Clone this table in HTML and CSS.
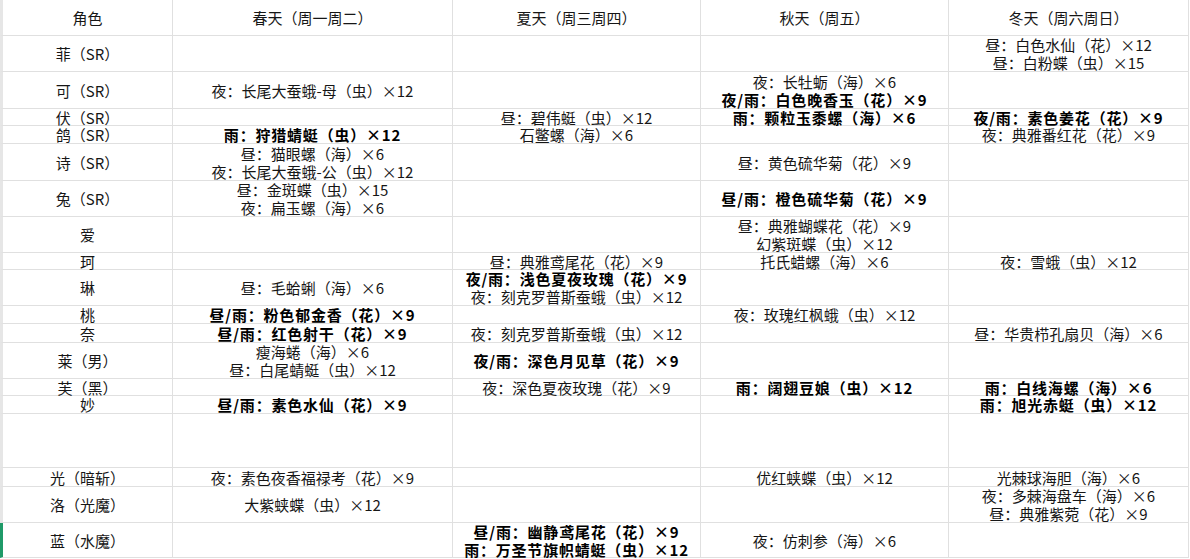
FILE: index.html
```html
<!DOCTYPE html>
<html lang="zh-CN">
<head>
<meta charset="utf-8">
<title>角色季节采集表</title>
<link rel="stylesheet" href="styles.css">
</head>
<body>
<div class="sheet">
  <div class="c first">角色</div><div class="c">春天（周一周二）</div><div class="c">夏天（周三周四）</div><div class="c">秋天（周五）</div><div class="c">冬天（周六周日）</div>

  <div class="c first">菲（SR）</div><div class="c"></div><div class="c"></div><div class="c"></div><div class="c"><span>昼：白色水仙（花）×12</span><span>昼：白粉蝶（虫）×15</span></div>

  <div class="c first">可（SR）</div><div class="c">夜：长尾大蚕蛾-母（虫）×12</div><div class="c"></div><div class="c"><span>夜：长牡蛎（海）×6</span><b>夜/雨：白色晚香玉（花）×9</b></div><div class="c"></div>

  <div class="c first">伏（SR）</div><div class="c"></div><div class="c">昼：碧伟蜓（虫）×12</div><div class="c"><b>雨：颗粒玉黍螺（海）×6</b></div><div class="c"><b>夜/雨：素色姜花（花）×9</b></div>

  <div class="c first">鸽（SR）</div><div class="c"><b>雨：狩猎蜻蜓（虫）×12</b></div><div class="c">石鳖螺（海）×6</div><div class="c"></div><div class="c">夜：典雅番红花（花）×9</div>

  <div class="c first">诗（SR）</div><div class="c"><span>昼：猫眼螺（海）×6</span><span>夜：长尾大蚕蛾-公（虫）×12</span></div><div class="c"></div><div class="c">昼：黄色硫华菊（花）×9</div><div class="c"></div>

  <div class="c first">兔（SR）</div><div class="c"><span>昼：金斑蝶（虫）×15</span><span>夜：扁玉螺（海）×6</span></div><div class="c"></div><div class="c"><b>昼/雨：橙色硫华菊（花）×9</b></div><div class="c"></div>

  <div class="c first">爱</div><div class="c"></div><div class="c"></div><div class="c"><span>昼：典雅蝴蝶花（花）×9</span><span>幻紫斑蝶（虫）×12</span></div><div class="c"></div>

  <div class="c first">珂</div><div class="c"></div><div class="c">昼：典雅鸢尾花（花）×9</div><div class="c">托氏蜡螺（海）×6</div><div class="c">夜：雪蛾（虫）×12</div>

  <div class="c first">琳</div><div class="c">昼：毛蛤蜊（海）×6</div><div class="c"><b>夜/雨：浅色夏夜玫瑰（花）×9</b><span>夜：刻克罗普斯蚕蛾（虫）×12</span></div><div class="c"></div><div class="c"></div>

  <div class="c first">桃</div><div class="c"><b>昼/雨：粉色郁金香（花）×9</b></div><div class="c"></div><div class="c">夜：玫瑰红枫蛾（虫）×12</div><div class="c"></div>

  <div class="c first">奈</div><div class="c"><b>昼/雨：红色射干（花）×9</b></div><div class="c">夜：刻克罗普斯蚕蛾（虫）×12</div><div class="c"></div><div class="c">昼：华贵栉孔扇贝（海）×6</div>

  <div class="c first">莱（男）</div><div class="c"><span>瘦海蜷（海）×6</span><span>昼：白尾蜻蜓（虫）×12</span></div><div class="c"><b>夜/雨：深色月见草（花）×9</b></div><div class="c"></div><div class="c"></div>

  <div class="c first">芙（黑）</div><div class="c"></div><div class="c">夜：深色夏夜玫瑰（花）×9</div><div class="c"><b>雨：阔翅豆娘（虫）×12</b></div><div class="c"><b>雨：白线海螺（海）×6</b></div>

  <div class="c first">妙</div><div class="c"><b>昼/雨：素色水仙（花）×9</b></div><div class="c"></div><div class="c"></div><div class="c"><b>雨：旭光赤蜓（虫）×12</b></div>

  <div class="c first"></div><div class="c"></div><div class="c"></div><div class="c"></div><div class="c"></div>

  <div class="c first">光（暗斩）</div><div class="c">夜：素色夜香福禄考（花）×9</div><div class="c"></div><div class="c">优红蛱蝶（虫）×12</div><div class="c">光棘球海胆（海）×6</div>

  <div class="c first">洛（光魔）</div><div class="c">大紫蛱蝶（虫）×12</div><div class="c"></div><div class="c"></div><div class="c"><span>夜：多棘海盘车（海）×6</span><span>昼：典雅紫菀（花）×9</span></div>

  <div class="c first sel">蓝（水魔）</div><div class="c"></div><div class="c"><b>昼/雨：幽静鸢尾花（花）×9</b><b>雨：万圣节旗帜蜻蜓（虫）×12</b></div><div class="c">夜：仿刺参（海）×6</div><div class="c"></div>
</div>
</body>
</html>
```
FILE: styles.css
```css
html, body {
  margin: 0;
  padding: 0;
  background: #ffffff;
}

body {
  font-family: "Noto Sans CJK SC", "Noto Sans", sans-serif;
  font-size: 15px;
  color: #161616;
}

.sheet {
  display: grid;
  width: 1189px;
  grid-template-columns: 173px 280px 248px 248px 240px;
  grid-template-rows: 36px 36px 37px 17px 18px 37px 36px 36px 17px 36px 18px 19px 36px 17px 18px 54px 19px 36px 35px;
}

.c {
  box-sizing: border-box;
  display: flex;
  flex-direction: column;
  align-items: center;
  justify-content: center;
  row-gap: 1px;
  text-align: center;
  white-space: nowrap;
  line-height: 17px;
  border-right: 1px solid #e0e0e0;
  border-bottom: 1px solid #e0e0e0;
}

.first {
  border-left: 3px solid #e6e6e6;
}

.sel {
  border-left-color: #1f9a68;
}

.c b {
  font-weight: 700;
  letter-spacing: 0.8px;
  color: #000000;
}
```
